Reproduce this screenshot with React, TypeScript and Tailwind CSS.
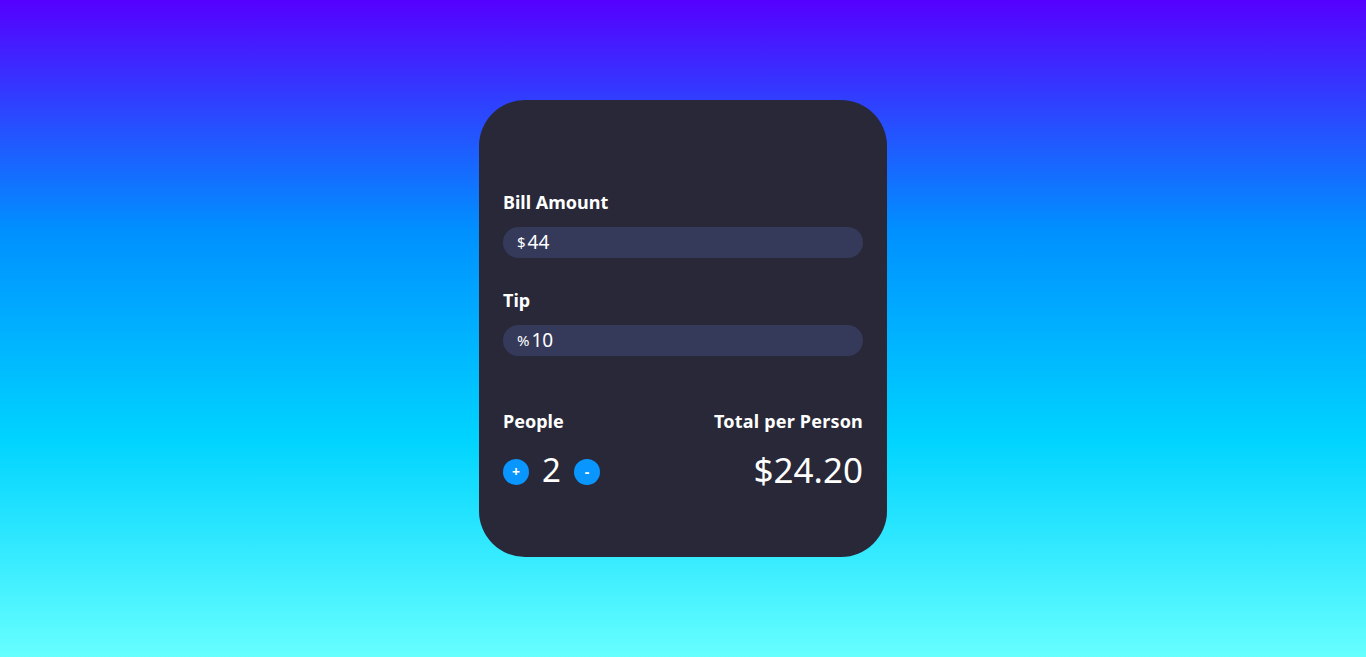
import React from "react";

export default function App() {
  return (
    <div
      className="h-screen w-full flex items-center justify-center bg-[linear-gradient(180deg,#5500ff_0%,#0090ff_35%,#00d4ff_67%,#66ffff_100%)]"
      style={{ fontFamily: '"Noto Sans", "DejaVu Sans", sans-serif' }}
    >
      <div className="w-[408px] h-[457px] rounded-[46px] bg-[#282838] px-6 pt-[90px] text-white">
        <div className="text-[18px] leading-6 font-bold">Bill Amount</div>
        <div className="mt-[13px] h-[31px] rounded-full bg-[#363a5a] flex items-center pl-[14px] text-[19px]">
          <span className="text-[15px] mr-[2px]">$</span>44
        </div>
        <div className="mt-[30px] text-[18px] leading-6 font-bold">Tip</div>
        <div className="mt-[13px] h-[31px] rounded-full bg-[#363a5a] flex items-center pl-[14px] text-[19px]">
          <span className="text-[15px] mr-[2px]">%</span>10
        </div>
        <div className="mt-[53px] flex justify-between text-[18px] leading-6 font-bold">
          <span>People</span>
          <span className="tracking-[0.2px]">Total per Person</span>
        </div>
        <div className="mt-[17px] flex items-start justify-between">
          <div className="flex items-start">
            <div className="mt-[9px] w-[26px] h-[26px] rounded-full bg-[#0a96ff] flex items-center justify-center text-[14px] font-bold leading-none">+</div>
            <span className="mx-[13px] text-[33px] leading-[40px]">2</span>
            <div className="mt-[9px] w-[26px] h-[26px] rounded-full bg-[#0a96ff] flex items-center justify-center text-[14px] font-bold leading-none">-</div>
          </div>
          <span className="text-[35px] leading-[40px]">$24.20</span>
        </div>
      </div>
    </div>
  );
}
